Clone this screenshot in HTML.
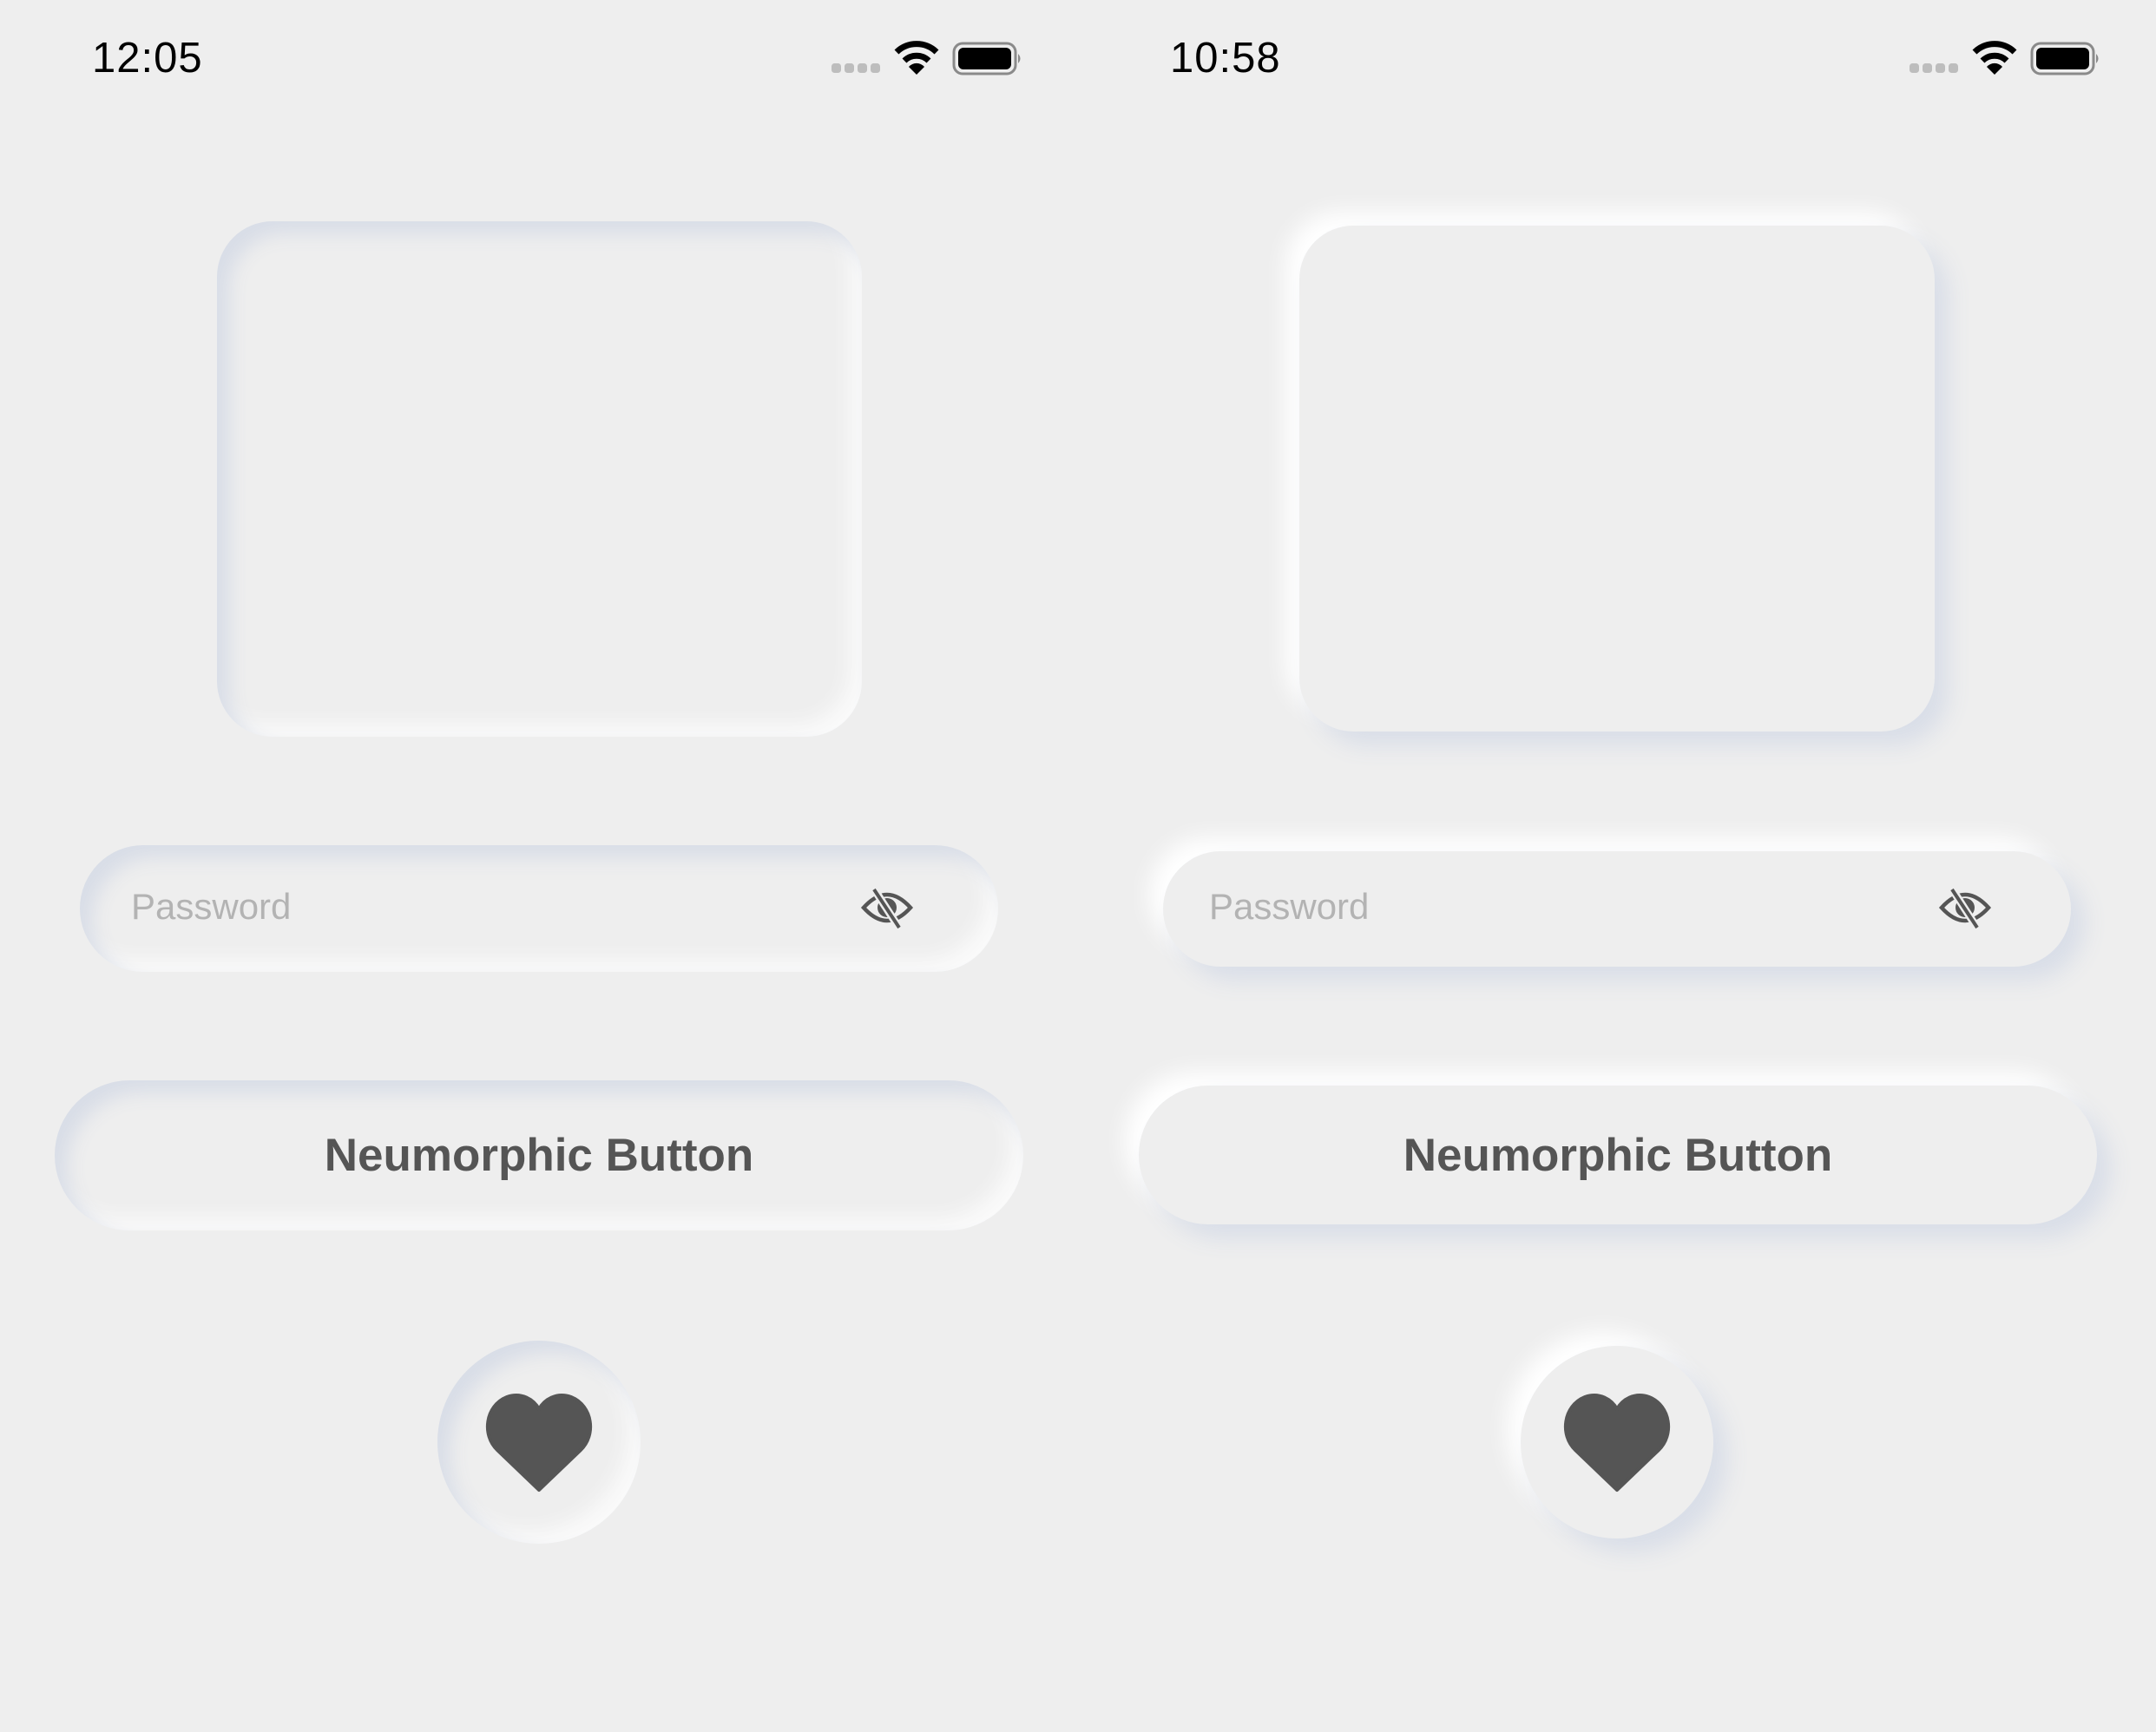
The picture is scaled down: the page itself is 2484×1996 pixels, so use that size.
<!DOCTYPE html>
<html><head><meta charset="utf-8"><style>
*{margin:0;padding:0;box-sizing:border-box}
body{width:2484px;height:1996px;background:#eeeeee;position:relative;overflow:hidden;font-family:"Liberation Sans",sans-serif}
.a{position:absolute}
.time{font-size:49px;color:#000;top:39px;letter-spacing:1px}
.in{background:#eeeeee;box-shadow:inset 14px 14px 22px #d8dde7,inset -14px -14px 22px #fafafa}
.out{background:#eeeeee;box-shadow:16px 16px 26px #d9dee8,-16px -16px 26px #ffffff}
.ph{font-size:42px;color:#b3b3b3}
.btn{font-size:53px;font-weight:bold;color:#555;display:flex;align-items:center;justify-content:center}
</style></head><body>
<svg width="0" height="0" style="position:absolute"><defs>
<g id="sb">
<rect x="958" y="73" width="11" height="11" rx="3.5" fill="#bdbdbd"/>
<rect x="973" y="73" width="11" height="11" rx="3.5" fill="#bdbdbd"/>
<rect x="988" y="73" width="11" height="11" rx="3.5" fill="#bdbdbd"/>
<rect x="1003" y="73" width="11" height="11" rx="3.5" fill="#bdbdbd"/>
<path d="M1033 60 A33 33 0 0 1 1079 60" fill="none" stroke="#000" stroke-width="7"/>
<path d="M1042 70 A20 20 0 0 1 1070 70" fill="none" stroke="#000" stroke-width="7"/>
<path d="M1056 86 L1047 77 A12 12 0 0 1 1065 77 Z" fill="#000"/>
<rect x="1099" y="50" width="71" height="35" rx="10" fill="none" stroke="#8a8a8a" stroke-width="3"/>
<rect x="1104" y="55" width="61" height="25" rx="6" fill="#000"/>
<path d="M1173 62 Q1178 67.5 1173 73 Z" fill="#8a8a8a"/>
</g>
<g id="eye"><path d="M-27 0 Q0 -30 27 0 Q0 30 -27 0 Z" fill="none" stroke="#555" stroke-width="4.5"/><circle r="11" fill="#555"/><line x1="-14" y1="-20" x2="13" y2="22" stroke="#eeeeee" stroke-width="9"/><line x1="-15" y1="-21" x2="14" y2="23" stroke="#555" stroke-width="4"/></g>
<path id="heart" d="M0 55 L-48 9 C-66 -8 -62 -42 -37 -52 C-20 -58 -6 -49 0 -38 C6 -49 20 -58 37 -52 C62 -42 66 -8 48 9 Z" fill="#555" stroke="#555" stroke-width="4" stroke-linejoin="round"/>
</defs></svg>

<div class="a time" style="left:106px">12:05</div>
<div class="a time" style="left:1348px">10:58</div>
<svg class="a" style="left:0;top:0" width="1242" height="160" viewBox="0 0 1242 160"><use href="#sb"/></svg>
<svg class="a" style="left:1242px;top:0" width="1242" height="160" viewBox="0 0 1242 160"><use href="#sb"/></svg>

<div class="a in" style="left:250px;top:255px;width:743px;height:594px;border-radius:64px"></div>
<div class="a out" style="left:1497px;top:260px;width:732px;height:583px;border-radius:62px"></div>

<div class="a in" style="left:92px;top:974px;width:1058px;height:146px;border-radius:73px"></div>
<div class="a ph" style="left:151px;top:1021px">Password</div>
<svg class="a" style="left:990px;top:1016px" width="64" height="60" viewBox="-32 -30 64 60"><use href="#eye"/></svg>

<div class="a out" style="left:1340px;top:981px;width:1046px;height:133px;border-radius:67px"></div>
<div class="a ph" style="left:1393px;top:1021px">Password</div>
<svg class="a" style="left:2232px;top:1016px" width="64" height="60" viewBox="-32 -30 64 60"><use href="#eye"/></svg>

<div class="a in btn" style="left:63px;top:1245px;width:1116px;height:173px;border-radius:87px">Neumorphic Button</div>
<div class="a out btn" style="left:1312px;top:1251px;width:1104px;height:160px;border-radius:80px">Neumorphic Button</div>

<div class="a in" style="left:504px;top:1545px;width:234px;height:234px;border-radius:50%"></div>
<div class="a out" style="left:1752px;top:1551px;width:222px;height:222px;border-radius:50%"></div>
<svg class="a" style="left:556px;top:1604px" width="130" height="120" viewBox="-65 -58 130 120"><use href="#heart"/></svg>
<svg class="a" style="left:1798px;top:1604px" width="130" height="120" viewBox="-65 -58 130 120"><use href="#heart"/></svg>
</body></html>
